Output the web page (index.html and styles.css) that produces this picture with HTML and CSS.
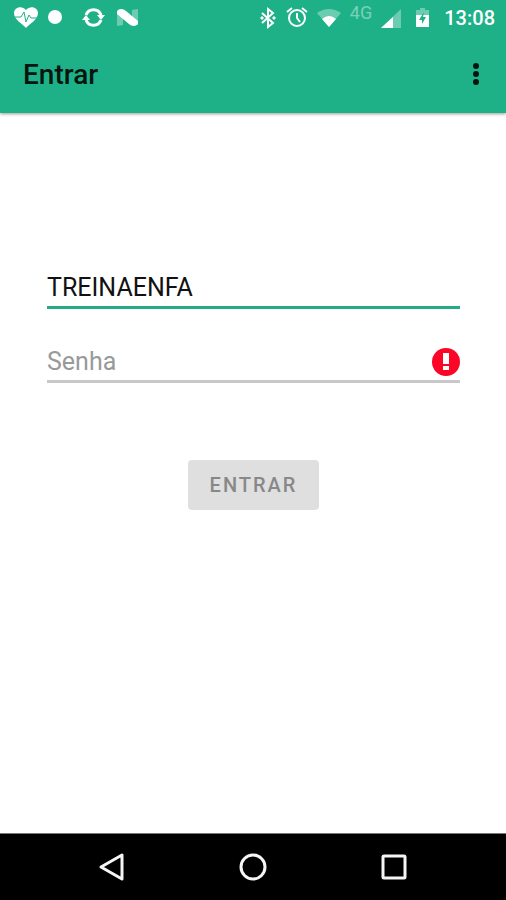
FILE: index.html
```html
<!DOCTYPE html>
<html lang="pt-BR">
<head>
<meta charset="utf-8">
<meta name="viewport" content="width=device-width, initial-scale=1">
<title>Entrar</title>
<link rel="stylesheet" href="styles.css">
</head>
<body>
<header class="top">
  <div class="status">
    <div class="status-left">
      <svg class="icon" viewBox="0 0 24 24" aria-hidden="true"><path class="fill" d="M12 22C9 18 0 14 0 7C0 1 8 -1 12 4C16 -1 24 1 24 7C24 14 15 18 12 22Z"/><path class="pulse" d="M1 11H7L10 6L12 16L15 9L17 12H23"/></svg>
      <svg class="icon" viewBox="0 0 24 24" aria-hidden="true"><circle class="fill" cx="7" cy="11" r="7"/></svg>
      <svg class="icon" viewBox="0 0 24 24" aria-hidden="true"><path class="line" d="M4 9A8 8 0 0 1 19 9M19 14A8 8 0 0 1 4 14"/><path class="fill" d="M15 9H23L19 14ZM0 14L4 9L8 14Z"/></svg>
      <svg class="icon" viewBox="0 0 24 24" aria-hidden="true"><path class="fade" d="M1 4H7V19L1 20ZM16 4L22 3V19H16Z"/><path class="fill" d="M1 6Q2 3 5 3Q8 3 10 5L22 15V18Q20 20 18 20Q15 20 13 18L1 8Z"/></svg>
    </div>
    <div class="status-right">
      <svg class="icon" viewBox="0 0 24 24" aria-hidden="true"><path class="line thin" d="M8 7L19 17L14 21V3L19 7L8 17"/><path class="fill" d="M6 12L8 10L10 12L8 14ZM18 12L20 10L22 12L20 14Z"/></svg>
      <svg class="icon" viewBox="0 0 24 24" aria-hidden="true"><circle class="line thin" cx="11" cy="12" r="8"/><path class="line thin" d="M11 7V12L14 16M1 6L6 2M16 2L21 6"/></svg>
      <svg class="icon" viewBox="1 0 24 24" aria-hidden="true"><path class="fade" d="M0 7Q12 -1 24 7L12 21Z"/><path class="fill" d="M5 13Q12 7 19 13L12 21Z"/></svg>
      <span class="network">4G</span>
      <svg class="icon" viewBox="0 0 24 24" aria-hidden="true"><path class="fade" d="M1 22L21 3V22Z"/><path class="fill" d="M1 22L13 11V22Z"/></svg>
      <svg class="icon" viewBox="0 0 24 24" aria-hidden="true"><path class="fade" d="M4 4H8V2H13V4H17V10H4Z"/><path class="fill" d="M4 9H17V21H4Z"/><path class="bolt" d="M12 6L7 14H10V18L14 11H11Z"/></svg>
      <time>13:08</time>
    </div>
  </div>
  <div class="appbar">
    <h1>Entrar</h1>
    <button class="more" type="button" aria-label="Mais opções"><svg viewBox="0 0 24 24" aria-hidden="true"><circle cx="12" cy="3" r="3"/><circle cx="12" cy="11" r="3"/><circle cx="12" cy="19" r="3"/></svg></button>
  </div>
</header>
<main>
  <form class="login">
    <input class="field active" type="text" aria-label="Usuário" value="TREINAENFA">
    <div class="field password">
      <input type="password" aria-label="Senha" placeholder="Senha">
      <svg class="alert" viewBox="0 0 28 28" aria-hidden="true"><circle class="alert-disc" cx="14" cy="14" r="14"/><path class="fill" d="M11 5H17V16H11ZM11 18H17V22H11Z"/></svg>
    </div>
    <button class="submit" type="submit" disabled>ENTRAR</button>
  </form>
</main>
<nav class="nav">
  <button type="button" aria-label="Voltar"><svg viewBox="0 0 28 28"><path d="M24 2V26L3 14Z"/></svg></button>
  <button type="button" aria-label="Início"><svg viewBox="0 0 28 28"><circle cx="14" cy="14" r="12"/></svg></button>
  <button type="button" aria-label="Recentes"><svg viewBox="0 0 28 28"><rect x="3" y="3" width="22" height="22" rx="1"/></svg></button>
</nav>
</body>
</html>
```
FILE: styles.css
```css
* { box-sizing: border-box; }
body {
  margin: 0;
  min-height: 100vh;
  display: flex;
  flex-direction: column;
  background: #fff;
  font-family: Roboto, "Liberation Sans", sans-serif;
}
button, input { font: inherit; border: 0; padding: 0; background: none; }
svg { display: block; flex: none; overflow: visible; }
.top { background: #1eb188; box-shadow: 0 1px 3px rgba(0, 0, 0, .4); }
.status {
  display: flex;
  justify-content: space-between;
  height: 36px;
  padding: 0 11px 0 14px;
  color: #fff;
}
.status-left, .status-right { display: flex; align-items: center; }
.status-left { gap: 10px; }
.status-right { gap: 8px; }
.icon { width: 24px; height: 24px; }
.fill { fill: #fff; }
.fade { fill: #fff; opacity: .35; }
.line { fill: none; stroke: #fff; stroke-width: 3px; }
.thin { stroke-width: 2px; }
.pulse { fill: none; stroke: #1eb188; stroke-width: 1px; }
.bolt { fill: #1eb188; }
.network { font-size: 18px; line-height: 18px; padding-bottom: 10px; opacity: .4; }
.status time { font-size: 20px; font-weight: 500; }
.appbar {
  display: flex;
  align-items: center;
  justify-content: space-between;
  height: 77px;
  padding: 0 18px 0 23px;
}
.appbar h1 { margin: 0; font-size: 28px; font-weight: 500; color: #06150f; }
.more svg { width: 24px; height: 24px; fill: #06150f; }
main { flex: 1; padding: 152px 46px 24px 47px; }
.login { display: flex; flex-direction: column; }
.field {
  width: 100%;
  height: 44px;
  padding-top: 4px;
  border-bottom: 3px solid #c8c8c8;
  border-radius: 0;
  outline: 0;
  font-size: 25px;
  color: #111;
}
.active { border-color: #25ac84; }
.password { display: flex; align-items: center; margin-top: 30px; }
.password input { flex: 1; min-width: 0; outline: 0; }
.password input::placeholder { color: #999; opacity: 1; }
.alert { width: 28px; height: 28px; }
.alert-disc { fill: #fc0628; }
.submit {
  align-self: center;
  margin-top: 77px;
  padding: 0 22px;
  height: 50px;
  border-radius: 4px;
  background: #dfdfdf;
  color: #888;
  font-size: 20px;
  font-weight: 500;
  letter-spacing: 2px;
}
.nav {
  display: flex;
  justify-content: center;
  gap: 113px;
  height: 67px;
  background: #000;
  border-top: 1px solid #777;
}
.nav svg { width: 28px; height: 28px; fill: none; stroke: #f5f5f5; stroke-width: 3px; stroke-linejoin: round; }
```
